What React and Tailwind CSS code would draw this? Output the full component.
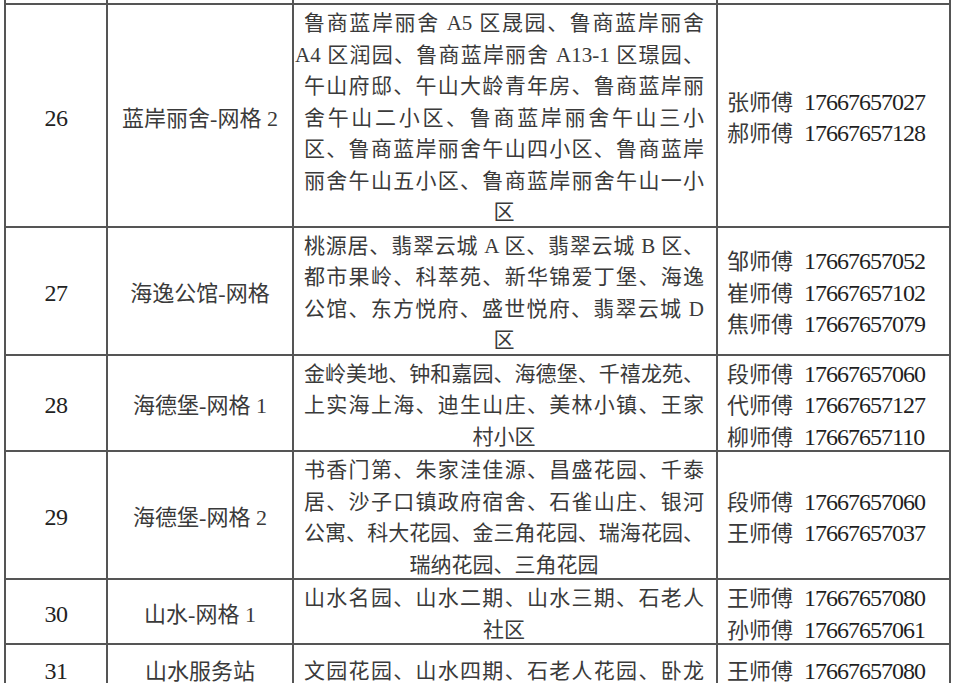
import React from 'react';

const LINE = 'border-[#555]';

const rows = [
  {
    no: '26',
    name: '蓝岸丽舍-网格 2',
    lines: [
      '鲁商蓝岸丽舍 A5 区晟园、鲁商蓝岸丽舍',
      'A4 区润园、鲁商蓝岸丽舍 A13-1 区璟园、',
      '午山府邸、午山大龄青年房、鲁商蓝岸丽',
      '舍午山二小区、鲁商蓝岸丽舍午山三小',
      '区、鲁商蓝岸丽舍午山四小区、鲁商蓝岸',
      '丽舍午山五小区、鲁商蓝岸丽舍午山一小',
    ],
    tail: '区',
    wide: 1,
    phones: [
      ['张师傅', '17667657027'],
      ['郝师傅', '17667657128'],
    ],
  },
  {
    no: '27',
    name: '海逸公馆-网格',
    lines: [
      '桃源居、翡翠云城 A 区、翡翠云城 B 区、',
      '都市果岭、科萃苑、新华锦爱丁堡、海逸',
      '公馆、东方悦府、盛世悦府、翡翠云城 D',
    ],
    tail: '区',
    phones: [
      ['邹师傅', '17667657052'],
      ['崔师傅', '17667657102'],
      ['焦师傅', '17667657079'],
    ],
  },
  {
    no: '28',
    name: '海德堡-网格 1',
    lines: ['金岭美地、钟和嘉园、海德堡、千禧龙苑、', '上实海上海、迪生山庄、美林小镇、王家'],
    tail: '村小区',
    phones: [
      ['段师傅', '17667657060'],
      ['代师傅', '17667657127'],
      ['柳师傅', '17667657110'],
    ],
  },
  {
    no: '29',
    name: '海德堡-网格 2',
    lines: [
      '书香门第、朱家洼佳源、昌盛花园、千泰',
      '居、沙子口镇政府宿舍、石雀山庄、银河',
      '公寓、科大花园、金三角花园、瑞海花园、',
    ],
    tail: '瑞纳花园、三角花园',
    phones: [
      ['段师傅', '17667657060'],
      ['王师傅', '17667657037'],
    ],
  },
  {
    no: '30',
    name: '山水-网格 1',
    lines: ['山水名园、山水二期、山水三期、石老人'],
    tail: '社区',
    phones: [
      ['王师傅', '17667657080'],
      ['孙师傅', '17667657061'],
    ],
  },
  {
    no: '31',
    name: '山水服务站',
    lines: ['文园花园、山水四期、石老人花园、卧龙'],
    phones: [['王师傅', '17667657080']],
    split: true,
  },
];

function Row({ row }) {
  const pad = row.split ? 'pt-[8px] pb-[10px]' : '';
  return (
    <div className={`flex border-b-2 ${LINE}`}>
      <div className={`w-[102px] shrink-0 border-r-2 ${LINE} flex items-center justify-center ${pad}`}>
        <span className="translate-y-[3px] text-[24px] leading-[31.5px] tracking-[-0.5px] text-[#222]">{row.no}</span>
      </div>
      <div className={`w-[186px] shrink-0 border-r-2 ${LINE} flex items-center justify-center ${pad}`}>
        <span className="translate-y-[3px] text-[22px] leading-[31.5px] text-[#3a3a3a]">{row.name}</span>
      </div>
      <div className={`w-[424px] shrink-0 border-r-2 ${LINE} pl-[10px] pr-[12px] ${pad}`}>
        <div className="translate-y-[3px] text-[21px] text-[#3a3a3a] leading-[31.5px]">
          {row.lines.map((l, i) => (
            <div
              key={i}
              className={`whitespace-nowrap text-justify [text-align-last:justify] ${row.wide === i ? '-ml-[9px]' : ''}`}
            >
              {l}
            </div>
          ))}
          {row.tail && <div className="whitespace-nowrap text-center">{row.tail}</div>}
        </div>
      </div>
      <div className={`w-[233px] shrink-0 border-r-2 ${LINE} pl-[9px] flex flex-col justify-center ${pad}`}>
        <div className="translate-y-[3px]">
          {row.phones.map(([n, p]) => (
            <div key={n + p} className="flex items-baseline h-[31.5px] leading-[31.5px] whitespace-nowrap">
              <span className="text-[22px] text-[#3a3a3a]">{n}</span>
              <span className="ml-[11px] text-[24px] tracking-[-1px] text-[#1f1f1f]">{p}</span>
            </div>
          ))}
        </div>
      </div>
    </div>
  );
}

export default function App() {
  return (
    <div className="w-[960px] h-[683px] overflow-hidden bg-white font-['Liberation_Serif','Noto_Sans_CJK_SC',serif]">
      <div className={`ml-[4px] w-[947px] border-l-2 ${LINE}`}>
        {/* bottom of the row above, cut off by the screen */}
        <div className={`flex h-[5px] border-b-2 ${LINE}`}>
          <div className={`w-[102px] shrink-0 border-r-2 ${LINE}`} />
          <div className={`w-[186px] shrink-0 border-r-2 ${LINE}`} />
          <div className={`w-[424px] shrink-0 border-r-2 ${LINE}`} />
          <div className={`w-[233px] shrink-0 border-r-2 ${LINE}`} />
        </div>
        {rows.map((r) => (
          <Row key={r.no} row={r} />
        ))}
      </div>
    </div>
  );
}
